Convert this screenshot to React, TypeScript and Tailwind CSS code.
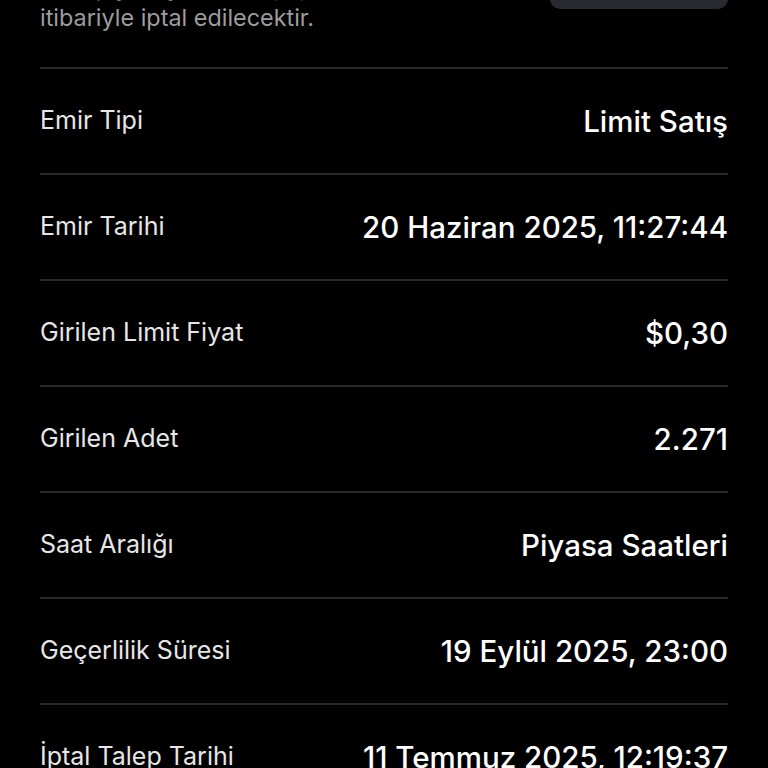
import React from "react";

const rows: [string, string][] = [
  ["Emir Tipi", "Limit Satış"],
  ["Emir Tarihi", "20 Haziran 2025, 11:27:44"],
  ["Girilen Limit Fiyat", "$0,30"],
  ["Girilen Adet", "2.271"],
  ["Saat Aralığı", "Piyasa Saatleri"],
  ["Geçerlilik Süresi", "19 Eylül 2025, 23:00"],
  ["İptal Talep Tarihi", "11 Temmuz 2025, 12:19:37"],
];

export default function App() {
  return (
    <div
      className="w-[768px] h-[768px] overflow-hidden bg-black"
      style={{ fontFamily: "Inter, 'Noto Sans', sans-serif" }}
    >
      <div className="px-[40px]">
        <div className="flex items-start justify-between mt-[-27px] pb-[34px]">
          <div className="text-[23.4px] leading-[30px] text-[#9c9c9f]">
            <div>Emir piyasaya iletilmiş, şu an</div>
            <div>itibariyle iptal edilecektir.</div>
          </div>
          <div className="mt-[-8px] w-[178px] h-[44px] rounded-[10px] bg-[#2a2a31]" />
        </div>
        {rows.map(([k, v]) => (
          <div
            key={k}
            className="flex h-[106px] items-center justify-between border-t-2 border-[#2a2a2c]"
          >
            <span className="text-[25px] text-[#e6e6e6]">{k}</span>
            <span className="text-[29.5px] font-medium text-white">{v}</span>
          </div>
        ))}
      </div>
    </div>
  );
}
